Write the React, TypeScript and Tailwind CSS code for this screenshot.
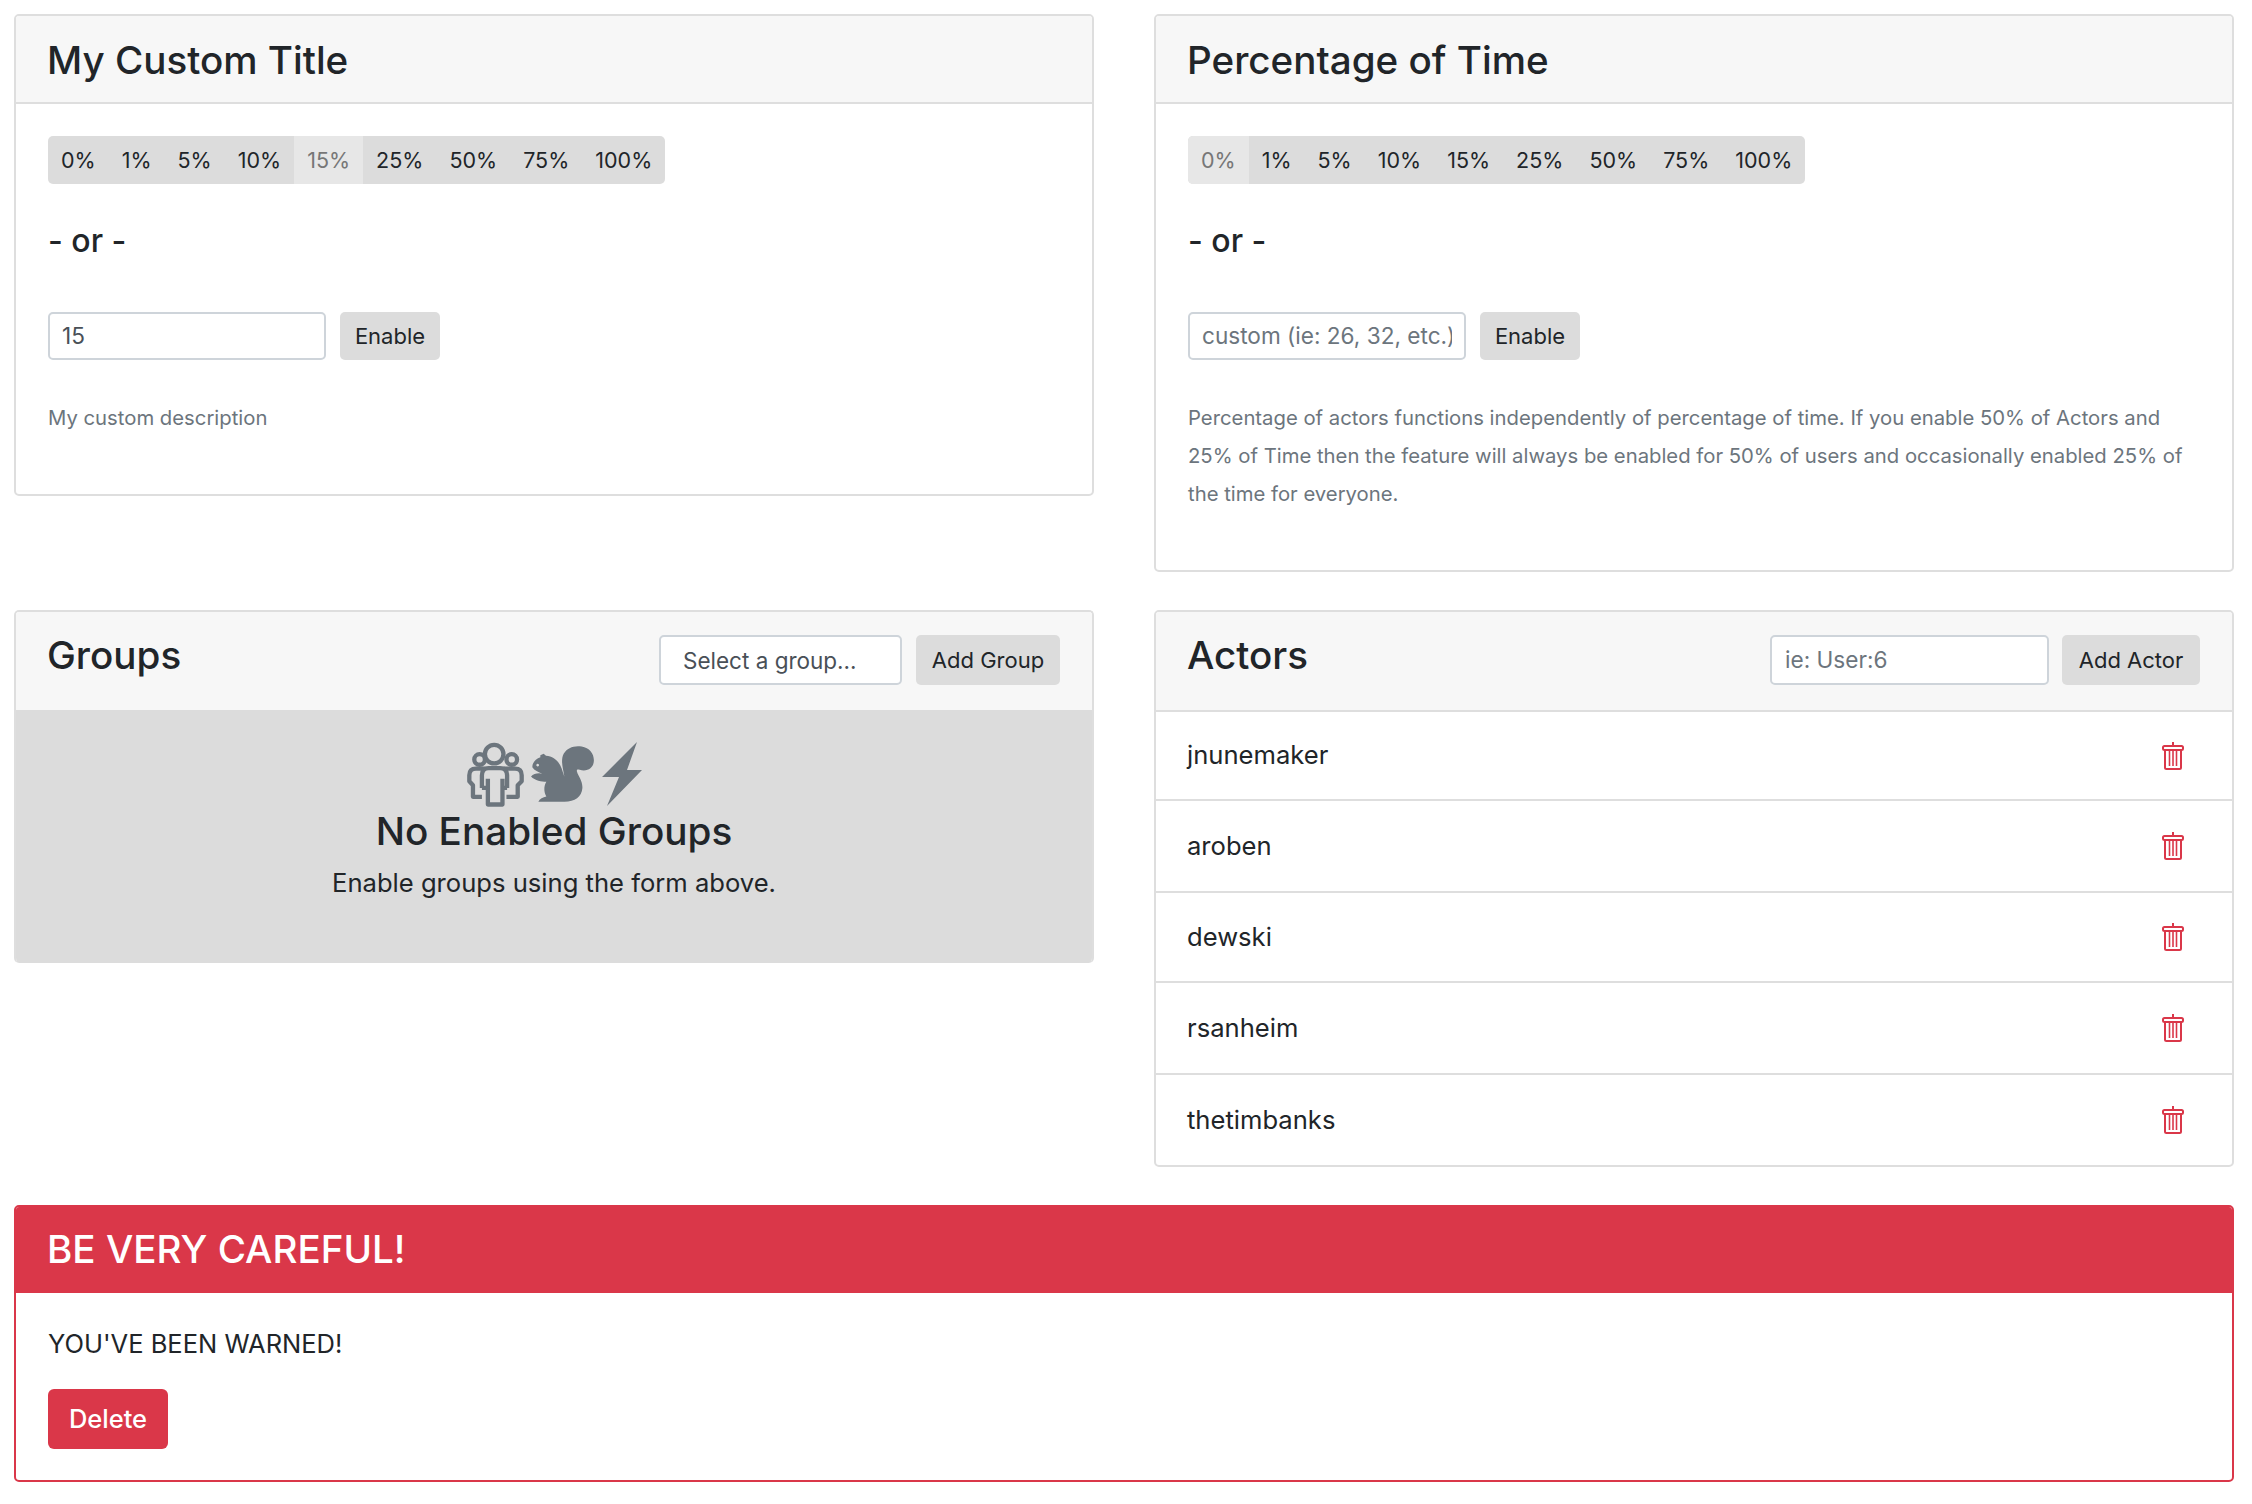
import React from "react";

const PCTS = ["0%", "1%", "5%", "10%", "15%", "25%", "50%", "75%", "100%"];
const ACTORS = [
  { name: "jnunemaker", h: "h-[87px]" },
  { name: "aroben", h: "h-[92px]" },
  { name: "dewski", h: "h-[90px]" },
  { name: "rsanheim", h: "h-[92px]" },
  { name: "thetimbanks", h: "h-[92px]" },
];

function Trash() {
  return (
    <svg width="22" height="28" viewBox="0 0 22 28" fill="none" stroke="#da3749" strokeWidth="2">
      <path d="M11 0v3" />
      <rect x="1" y="4" width="20" height="4" rx="1.5" />
      <path d="M3 8v17.5a1.5 1.5 0 0 0 1.5 1.5h13a1.5 1.5 0 0 0 1.5-1.5V8" />
      <path d="M7.5 9v15M11 9v15M14.5 9v15" strokeWidth="1.6" />
    </svg>
  );
}

function People() {
  return (
    <svg width="58" height="65" viewBox="105 40 175 195" fill="none" stroke="#6c757d" strokeWidth="13" strokeLinejoin="round">
      <circle cx="187" cy="76" r="28" />
      <circle cx="143" cy="92" r="16" />
      <circle cx="240" cy="92" r="16" />
      <path d="M150 205H123V170L112 158V140Q112 120 132 120H158" />
      <path d="M224 205H258V170L270 158V140Q270 120 250 120H216" />
      <path d="M150 178V140Q150 118 170 118H205Q226 118 226 140V178" />
      <path d="M168 150V228H212V150M150 178H168M212 178H226" />
    </svg>
  );
}

function Squirrel() {
  return (
    <svg width="65" height="57" viewBox="300 55 195 170" fill="#6c757d">
      <path
        fillRule="evenodd"
        d="M328 82L338 78L345 84C368 86 384 100 392 122C396 135 398 140 400 146C396 120 388 98 398 78C408 60 430 52 452 56C478 60 492 82 488 104C485 122 468 132 446 126C440 124 436 124 438 132C442 146 456 160 454 182C452 206 432 222 400 222H322C326 212 336 208 346 206C338 192 338 176 346 162C332 162 312 158 300 146C308 138 322 134 334 138C322 132 310 128 304 118C304 102 316 92 328 88Z M320 108a4 4 0 1 0 0.1 0Z"
      />
    </svg>
  );
}

function Bolt() {
  return (
    <svg width="40" height="64" viewBox="0 0 40 64" fill="#6c757d">
      <path d="M35 0L25 28H40L5 64L17 35H0Z" />
    </svg>
  );
}

function Card({ title, right, children, className = "" }: { title: string; right?: React.ReactNode; children: React.ReactNode; className?: string }) {
  return (
    <div className={`border-2 border-[#dedede] rounded-[5px] overflow-hidden ${className}`}>
      <div className={`bg-[#f7f7f7] border-b-2 border-[#dedede] flex items-start justify-between pl-[31px] pr-[32px] ${right ? "h-[100px] pt-[20px]" : "h-[88px] pt-[21px]"}`}>
        <h3 className="text-[38.6px] leading-[46px] font-medium text-[#212529]">{title}</h3>
        {right}
      </div>
      {children}
    </div>
  );
}

function PercentBody({ active, value, placeholder, desc }: { active: string; value?: string; placeholder?: string; desc: React.ReactNode }) {
  return (
    <div className="px-[32px] pt-[32px]">
      <div className="inline-flex h-[48px] bg-[#dcdcdc] rounded-[5px] overflow-hidden">
        {PCTS.map((p) => (
          <button
            key={p}
            className={`px-[13px] text-[21.5px] leading-[48px] ${p === active ? "bg-[#e7e7e7] text-[#777777]" : "text-[#212529]"}`}
          >
            {p}
          </button>
        ))}
      </div>
      <div className="mt-[35px] text-[32px] leading-[44px] font-medium text-[#212529]">- or -</div>
      <div className="mt-[49px] flex gap-[14px] h-[48px]">
        <input
          readOnly
          value={value ?? ""}
          placeholder={placeholder}
          className="w-[278px] border-2 border-[#ced4da] rounded-[5px] pl-[12px] pr-[12px] text-[22.6px] text-[#495057] placeholder:text-[#6c757d] bg-white outline-none"
        />
        <button className="w-[100px] bg-[#dcdcdc] rounded-[5px] text-[22px] text-[#212529]">Enable</button>
      </div>
      <div className="mt-[39px] text-[20.3px] leading-[38px] text-[#6c757d] pb-[57px] pr-[8px]">{desc}</div>
    </div>
  );
}

export default function App() {
  return (
    <div className="w-[2252px] h-[1504px] bg-white pl-[14px] pt-[14px] font-['Inter',sans-serif] text-[#212529]">
      <div className="w-[2220px] grid grid-cols-2 gap-x-[60px] gap-y-[38px] items-start">
        <Card title="My Custom Title">
          <PercentBody active="15%" value="15" desc="My custom description" />
        </Card>
        <Card title="Percentage of Time">
          <PercentBody
            active="0%"
            placeholder="custom (ie: 26, 32, etc.)"
            desc="Percentage of actors functions independently of percentage of time. If you enable 50% of Actors and 25% of Time then the feature will always be enabled for 50% of users and occasionally enabled 25% of the time for everyone."
          />
        </Card>
        <Card
          title="Groups"
          className="border-b-0"
          right={
            <div className="flex gap-[14px] h-[50px] mt-[3px]">
              <select className="appearance-none w-[243px] border-2 border-[#ced4da] rounded-[5px] pl-[22px] text-[22.5px] text-[#495057] bg-white outline-none pt-[2px]">
                <option>Select a group...</option>
              </select>
              <button className="w-[144px] bg-[#dcdcdc] rounded-[5px] text-[22px] text-[#212529]">Add Group</button>
            </div>
          }
        >
          <div className="bg-[#dcdcdc] h-[253px] -mt-[2px] flex flex-col items-center pt-[32px]">
            <div className="flex items-center gap-[6px] h-[64px]">
              <People />
              <Squirrel />
              <Bolt />
            </div>
            <div className="text-[38.7px] leading-[48px] font-medium mt-[1px]">No Enabled Groups</div>
            <div className="text-[25.6px] leading-[36px] mt-[10px]">Enable groups using the form above.</div>
          </div>
        </Card>
        <Card
          title="Actors"
          right={
            <div className="flex gap-[13px] h-[50px] mt-[3px]">
              <input
                readOnly
                placeholder="ie: User:6"
                className="w-[279px] border-2 border-[#ced4da] rounded-[5px] px-[13px] text-[22.6px] placeholder:text-[#6c757d] bg-white outline-none"
              />
              <button className="w-[138px] bg-[#dcdcdc] rounded-[5px] text-[22px] text-[#212529]">Add Actor</button>
            </div>
          }
        >
          {ACTORS.map((a, i) => (
            <div
              key={a.name}
              className={`${a.h} flex items-center justify-between pl-[31px] pr-[48px] text-[25.6px] ${i > 0 ? "border-t-2 border-[#dedede]" : ""}`}
            >
              <span>{a.name}</span>
              <Trash />
            </div>
          ))}
        </Card>
        <div className="col-span-2 border-2 border-[#da3749] rounded-[5px] overflow-hidden">
          <div className="bg-[#da3749] h-[86px] pl-[31px] pt-[19px] text-[38.6px] leading-[46px] font-medium text-white">BE VERY CAREFUL!</div>
          <div className="px-[32px] pt-[32px] h-[187px]">
            <div className="text-[25.5px] leading-[38px]">YOU'VE BEEN WARNED!</div>
            <button className="mt-[26px] w-[120px] h-[60px] bg-[#da3749] rounded-[6px] text-white text-[25.5px] font-medium">Delete</button>
          </div>
        </div>
      </div>
    </div>
  );
}
